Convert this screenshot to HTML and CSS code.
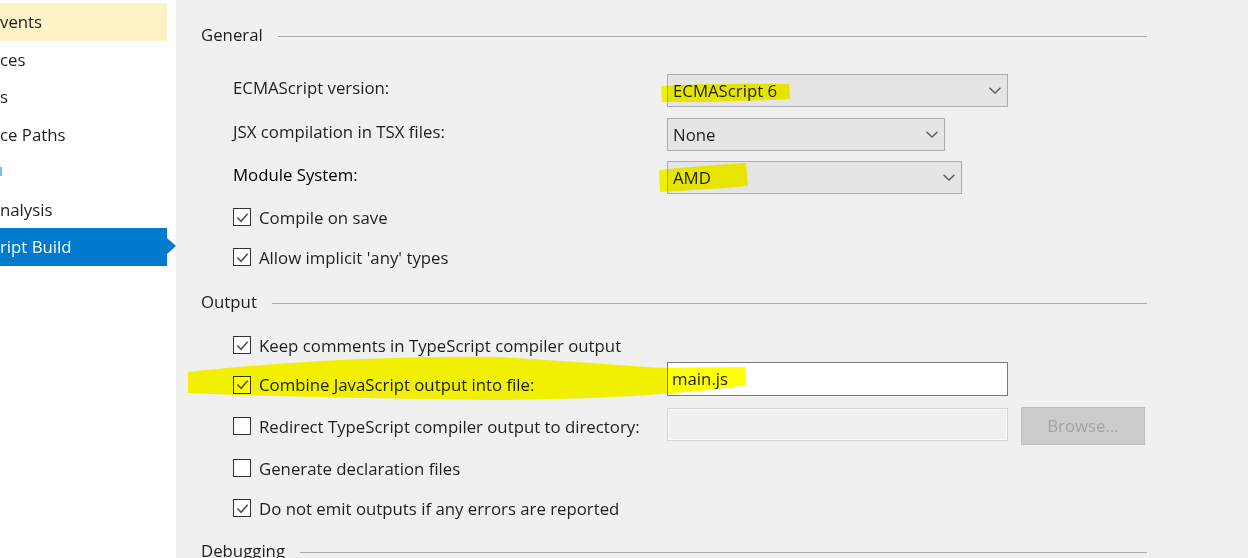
FILE: index.html
```html
<!DOCTYPE html>
<html>
<head>
<meta charset="utf-8">
<link rel="stylesheet" href="styles.css">
</head>
<body>
<div class="window">
  <nav class="sidebar">
    <div class="item hover">vents</div>
    <div class="item">ces</div>
    <div class="item">s</div>
    <div class="item">ce Paths</div>
    <div class="item"><span class="link-tip"></span></div>
    <div class="item">nalysis</div>
    <div class="item selected">ript Build</div>
  </nav>
  <main class="panel">
    <div class="group-head"><span>General</span><i class="rule"></i></div>
    <div class="rows">
      <div class="field f-ecma">
        <span class="lbl">ECMAScript version:</span>
        <div class="select w-wide"><span>ECMAScript 6</span><svg class="chev" viewBox="0 0 12 7"><polyline points="0.5,0.8 6,6 11.5,0.8"/></svg></div>
      </div>
      <div class="field f-jsx">
        <span class="lbl">JSX compilation in TSX files:</span>
        <div class="select w-jsx"><span>None</span><svg class="chev" viewBox="0 0 12 7"><polyline points="0.5,0.8 6,6 11.5,0.8"/></svg></div>
      </div>
      <div class="field f-module">
        <span class="lbl dark">Module System:</span>
        <div class="select w-module"><span>AMD</span><svg class="chev" viewBox="0 0 12 7"><polyline points="0.5,0.8 6,6 11.5,0.8"/></svg></div>
      </div>
      <div class="field f-compile">
        <label class="opt"><span class="box"><svg viewBox="0 0 16 16"><polyline points="2.5,8 6.5,12 13.5,4"/></svg></span>Compile on save</label>
      </div>
      <div class="field f-allow">
        <label class="opt"><span class="box"><svg viewBox="0 0 16 16"><polyline points="2.5,8 6.5,12 13.5,4"/></svg></span>Allow implicit 'any' types</label>
      </div>
    </div>

    <div class="group-head h-output"><span>Output</span><i class="rule"></i></div>
    <div class="rows">
      <div class="field f-keep">
        <label class="opt"><span class="box"><svg viewBox="0 0 16 16"><polyline points="2.5,8 6.5,12 13.5,4"/></svg></span>Keep comments in TypeScript compiler output</label>
      </div>
      <div class="field f-combine">
        <label class="opt col shift"><span class="box"><svg viewBox="0 0 16 16"><polyline points="2.5,8 6.5,12 13.5,4"/></svg></span>Combine JavaScript output into file:</label>
        <div class="textbox">main.js</div>
      </div>
      <div class="field f-redirect">
        <label class="opt col"><span class="box"></span>Redirect TypeScript compiler output to directory:</label>
        <div class="textbox disabled"></div>
        <div class="button disabled">Browse...</div>
      </div>
      <div class="field f-generate">
        <label class="opt"><span class="box"></span>Generate declaration files</label>
      </div>
      <div class="field f-noemit">
        <label class="opt"><span class="box"><svg viewBox="0 0 16 16"><polyline points="2.5,8 6.5,12 13.5,4"/></svg></span>Do not emit outputs if any errors are reported</label>
      </div>
    </div>

    <div class="group-head h-debug"><span>Debugging</span><i class="rule"></i></div>
  </main>
</div>
<svg class="marker" viewBox="0 0 1248 558" width="1248" height="558">
  <path d="M661,86 Q700,83 789,84 L790,99 Q730,102 662,102 Z"/>
  <path d="M659,170 Q700,166 746,163 L748,186 Q700,190 660,192 Z"/>
  <path d="M188,372 Q240,366 320,361 Q420,356 500,357 Q580,362 660,368 L640,368 L745,367 L746,385 Q700,392 660,394 Q600,399 500,400 Q400,399 320,397 Q250,396 188,393 Z"/>
</svg>
</body>
</html>
```
FILE: styles.css
```css
html, body {
  margin: 0;
  padding: 0;
}
body {
  position: relative;
  width: 1248px;
  height: 558px;
  overflow: hidden;
  font-family: "Open Sans", "Noto Sans", sans-serif;
  font-size: 16.8px;
  color: #1e1e1e;
  background: #f0f0f0;
}
.window {
  display: flex;
  height: 558px;
}
.sidebar {
  width: 176px;
  flex: none;
  background: #ffffff;
  padding-top: 3px;
  box-sizing: border-box;
}
.item {
  position: relative;
  width: 167px;
  height: 37.5px;
  display: flex;
  align-items: center;
  white-space: nowrap;
}
.item.hover {
  background: #fdf3c7;
}
.item.selected {
  background: #007acc;
  color: #ffffff;
}
.item.selected::after {
  content: "";
  position: absolute;
  left: 167px;
  top: 10px;
  border-top: 8.5px solid transparent;
  border-bottom: 8.5px solid transparent;
  border-left: 9px solid #007acc;
}
.link-tip {
  display: block;
  width: 2px;
  height: 9px;
  background: #6cc6f4;
}
.panel {
  flex: 1;
  padding: 22px 101px 0 25px;
  box-sizing: border-box;
  overflow: hidden;
}
.group-head {
  display: flex;
  align-items: center;
  gap: 15px;
  height: 24px;
}
.rule {
  flex: 1;
  height: 1px;
  background: #a8a8a8;
  margin-top: 4px;
}
.h-output { margin-top: 17px; }
.h-debug { margin-top: 15px; }
.rows {
  padding-left: 32px;
}
.field {
  display: flex;
  align-items: center;
}
.lbl {
  width: 434px;
  flex: none;
  margin-bottom: 6px;
}
.lbl.dark { color: #000; }
.f-ecma { margin-top: 28px; height: 33px; }
.f-jsx { margin-top: 11px; height: 33px; }
.f-module { margin-top: 10px; height: 33px; }
.f-compile { margin-top: 8px; height: 30px; }
.f-allow { margin-top: 10px; height: 30px; }
.f-keep { margin-top: 17px; height: 30px; }
.f-combine { margin-top: 2px; height: 34px; }
.f-redirect { margin-top: 11px; height: 38px; }
.f-generate { margin-top: 8px; height: 30px; }
.f-noemit { margin-top: 10px; height: 30px; }

.select {
  box-sizing: border-box;
  height: 33px;
  background: #e5e5e5;
  border: 1px solid #acacac;
  display: flex;
  align-items: center;
  justify-content: space-between;
  padding: 0 6px 1px 5px;
}
.w-wide { width: 341px; }
.w-jsx { width: 278px; }
.w-module { width: 295px; }
.chev {
  width: 12px;
  height: 7px;
  fill: none;
  stroke: #5a5a5a;
  stroke-width: 1.4;
}
.opt {
  display: flex;
  align-items: center;
  gap: 8px;
  height: 30px;
  white-space: nowrap;
}
.opt.col {
  width: 434px;
  flex: none;
}
.opt.shift {
  align-self: flex-start;
  margin-top: 7.5px;
}
.box {
  box-sizing: border-box;
  width: 18px;
  height: 18px;
  border: 1.5px solid #333333;
  background: #ffffff;
  display: flex;
  align-items: center;
  justify-content: center;
  flex: none;
}
.box svg {
  width: 15px;
  height: 15px;
  fill: none;
  stroke: #555555;
  stroke-width: 1.8;
}
.textbox {
  box-sizing: border-box;
  width: 341px;
  height: 34px;
  background: #ffffff;
  border: 1px solid #7a7a7a;
  padding: 0 5px 2px 4px;
  display: flex;
  align-items: center;
}
.textbox.disabled {
  height: 33px;
  background: #f0f0f0;
  border: 1px solid #d3d3d3;
  box-shadow: inset 0 0 0 1px #fbfbfb;
  align-self: flex-start;
  margin-top: 1px;
}
.button {
  box-sizing: border-box;
  margin-left: 13px;
  width: 124px;
  height: 38px;
  background: #cccccc;
  border: 1px solid #bfbfbf;
  color: #a3a3a3;
  display: flex;
  align-items: center;
  justify-content: center;
  padding-bottom: 2px;
}
.marker {
  position: absolute;
  left: 0;
  top: 0;
  pointer-events: none;
  mix-blend-mode: multiply;
  fill: #ffff00;
}
```
